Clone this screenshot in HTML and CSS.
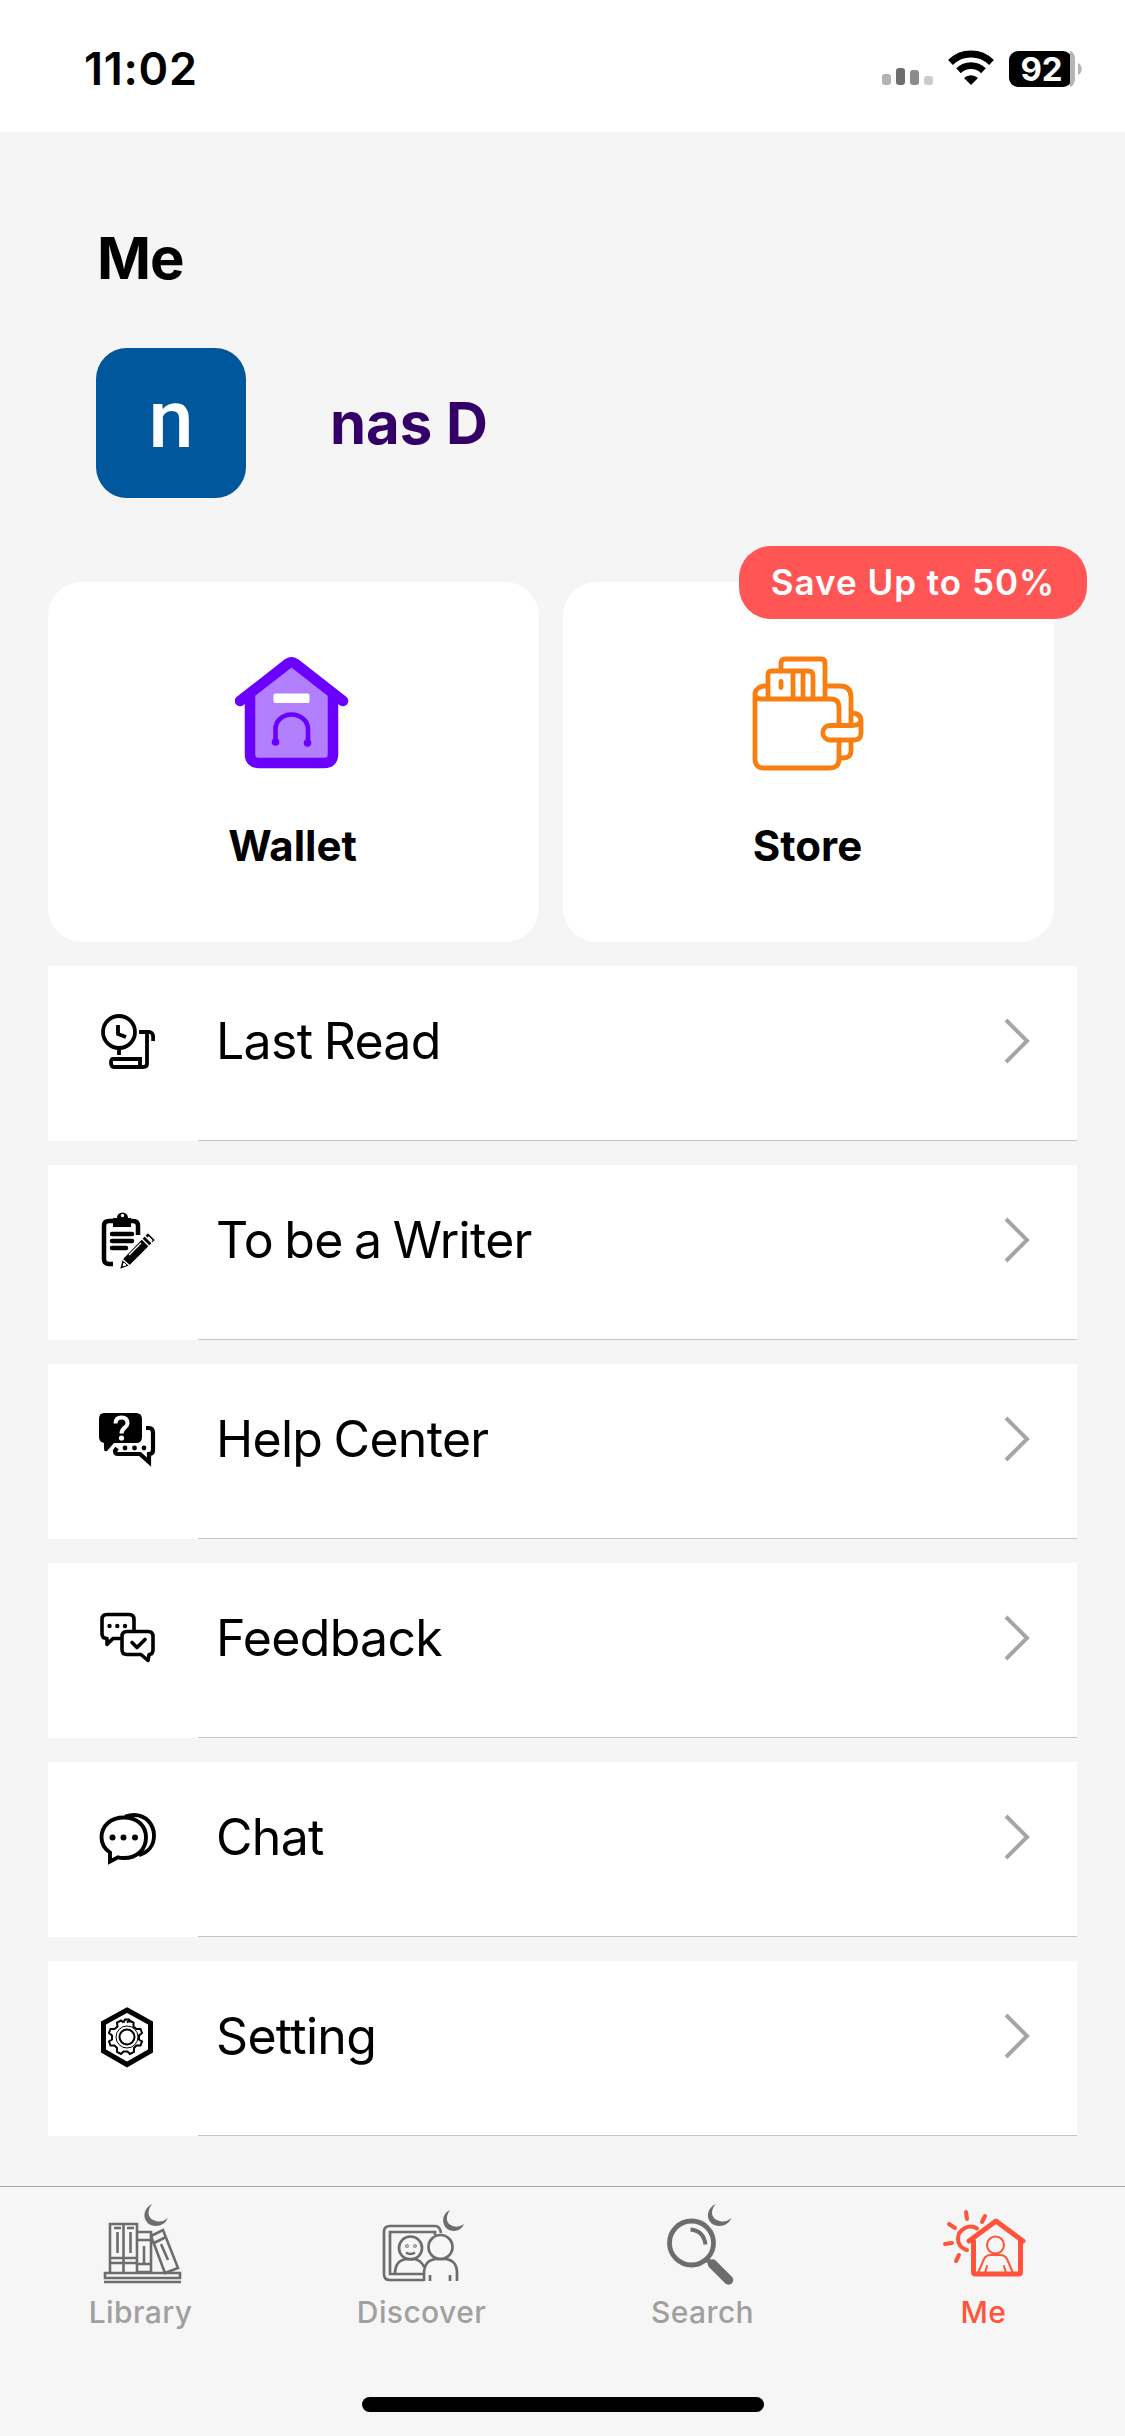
FILE: index.html
```html
<!DOCTYPE html>
<html lang="en">
<head>
<meta charset="utf-8">
<title>Me</title>
<link rel="stylesheet" href="styles.css">
</head>
<body>
<div class="screen">
  <header class="status">
    <span class="status-time">11:02</span>
    <svg class="status-icons" width="204" height="40" viewBox="0 0 204 40">
      <rect x="0" y="24" width="9" height="11" rx="3" fill="#b3b3b3"/>
      <rect x="14" y="18" width="9" height="17" rx="3" fill="#6e6e6e"/>
      <rect x="28" y="20" width="9" height="15" rx="3" fill="#8b8b8b"/>
      <rect x="42" y="26" width="9" height="9" rx="3" fill="#cbcbcb"/>
      <g fill="none" stroke="#000" stroke-width="6.8">
        <path d="M68.500 12.500A29 29 0 0 1 109.500 12.500"/>
        <path d="M76.500 20.700A18 18 0 0 1 101.500 20.700"/>
      </g>
      <path d="M89 35l-7-7a10 10 0 0 1 14 0z"/>
      <rect x="127" y="1" width="63" height="36" rx="9"/>
      <path d="M188 1c3.500 1 5 4 5 8v20c0 4-2 7-5 8z" fill="#b5b5b5"/>
      <path d="M196 13c5 2 5 10 0 12z" fill="#b5b5b5"/>
      <text class="battery-text" x="159.500" y="30.500" text-anchor="middle">92</text>
    </svg>
  </header>

  <main class="content">
    <h1 class="title">Me</h1>
    <section class="profile">
      <div class="avatar">n</div>
      <div class="name">nas D</div>
    </section>

    <section class="cards">
      <div class="card">
        <svg class="card-icon" width="116" height="116" viewBox="1.500 0 116 116">
          <path d="M16 39L58 7l42 32v66a5 5 0 0 1-5 5H21a5 5 0 0 1-5-5z" fill="#b280fe"/>
          <g fill="none" stroke="#6a00ff" stroke-linecap="round" stroke-linejoin="round">
            <path d="M6.500 46L54.500 8.500q3.500-2.500 7 0L109.500 46" stroke-width="10.500"/>
            <path d="M16.500 42v57q0 9 9 9h65q9 0 9-9V42" stroke-width="10.500"/>
            <path d="M42 88V74c0-8 7-14.500 16-14.500S74.500 66 74.500 74v15" stroke-width="4.600"/>
          </g>
          <circle cx="42" cy="87" r="3.800" fill="#6a00ff"/><circle cx="74" cy="88" r="3.800" fill="#6a00ff"/>
          <rect x="40" y="38.500" width="36" height="9.500" rx="2" fill="#fff"/>
        </svg>
        <span class="card-label">Wallet</span>
      </div>
      <div class="card">
        <span class="badge">Save Up to 50%</span>
        <svg class="card-icon" width="116" height="116" viewBox="0 0 116 116" fill="none" stroke="#f77f12" stroke-width="4.800" stroke-linejoin="round" stroke-linecap="butt">
          <path d="M31 16V8q0-4 4-4h36q4 0 4 4v37"/>
          <path d="M18 44V20q0-4 4-4h36q5 0 5 5v23M43 17v27M53 17v27"/>
          <path d="M31 26.500v6" stroke-linecap="round"/>
          <path d="M18 31h-3a10 10 0 0 0-10 7q0 6 6 6h70q8 0 8 8v19M89 87v17q0 9-9 9H14q-9 0-9-9V38"/>
          <path d="M75 31h15q11 0 11 11v29M101 87v9q0 7-8 7h-4"/>
          <path d="M101 58q10 0 10 8v12q0 7-7 7H80a7 7 0 0 1 0-14.500h22q9 0 9-6"/>
        </svg>
        <span class="card-label">Store</span>
      </div>
    </section>

    <ul class="menu">
      <li class="row">
        <svg class="row-icon" width="64" height="64" viewBox="0 0 64 64" fill="none" stroke="#000" stroke-width="3.800">
          <circle cx="25" cy="22" r="16"/><path d="M24 15v9l8 3"/>
          <path d="M25 40v5M45 22h11q4 1 3 9M53 23v31q0 3-4 3H20q-3 0-3-4.500T20 49h28M46 50v7"/>
        </svg>
        <span class="row-body"><span class="row-label">Last Read</span><svg class="chevron" width="28" height="48" viewBox="0 0 28 48"><path d="M3 3l21 21L3 45"/></svg></span>
      </li>
      <li class="row">
        <svg class="row-icon" width="64" height="64" viewBox="0 0 64 64" fill="none" stroke="#000" stroke-width="4.500">
          <path d="M20 12h-5q-5 0-5 5v33q0 5 5 5h4M37 12h2q5 0 5 5v9" />
          <path d="M18 25h20M18 32h20M18 39h14" stroke-linecap="round"/>
          <path d="M19 9h4a5.500 5.500 0 0 1 11 0h3v9H19z" fill="#000" stroke="none"/><circle cx="28.500" cy="6.500" r="1.700" fill="#fff" stroke="none"/>
          <path d="M25 61l3-11 26-27 8 8-26 26z" fill="#000" stroke="#fff" stroke-width="1.800"/>
          <path d="M47 29l9 9M35 46l12-12M28 50l8 7M50 26l9 9" stroke="#fff" stroke-width="1.400"/>
          <path d="M29 57l1-3 2 2z" fill="#fff" stroke="#fff" stroke-width="1"/><path d="M54 28l4 4" stroke="#fff" stroke-width="2"/>
        </svg>
        <span class="row-body"><span class="row-label">To be a Writer</span><svg class="chevron" width="28" height="48" viewBox="0 0 28 48"><path d="M3 3l21 21L3 45"/></svg></span>
      </li>
      <li class="row">
        <svg class="row-icon" width="64" height="64" viewBox="0 -1 64 64" fill="none" stroke="#000" stroke-width="4.200">
          <path d="M10 4h32q6 0 6 6v18q0 6-6 6H20l-7 8q-3 1-3-2v-6q-5-1-5-6V10q0-6 5-6z" fill="#000" stroke="none"/>
          <path d="M21.500 14.500q0-6 6-6t6 6c0 4-6 4-6 10" stroke="#fff" stroke-width="4"/><circle cx="27.500" cy="29" r="2.600" fill="#fff" stroke="none"/>
          <path d="M52 19h3q4 0 4 5v17q0 4-4 4v8l-9-8H24q-3 0-3-3l2-3"/>
          <g fill="#000" stroke="none"><circle cx="31" cy="39" r="2.400"/><circle cx="40.500" cy="39" r="2.400"/><circle cx="50" cy="39" r="2.400"/></g>
        </svg>
        <span class="row-body"><span class="row-label">Help Center</span><svg class="chevron" width="28" height="48" viewBox="0 0 28 48"><path d="M3 3l21 21L3 45"/></svg></span>
      </li>
      <li class="row">
        <svg class="row-icon" width="64" height="64" viewBox="0 -.500 64 64" fill="none" stroke="#000" stroke-width="3.600" stroke-linejoin="round">
          <path d="M40 23V12q0-5-5-5H13q-5 0-5 5v14q0 5 5 5v6l6-6h8"/>
          <path d="M33 24h21q5 0 5 5v13q0 5-4 5l-1 6-7-6H33q-5 0-5-5V29q0-5 5-5z"/>
          <path d="M38 35l5 5 8-8" stroke-linecap="round"/>
          <g fill="#000" stroke="none"><circle cx="15.500" cy="18.500" r="2.200"/><circle cx="23.300" cy="18.500" r="2.200"/><circle cx="31" cy="18.500" r="2.200"/></g>
        </svg>
        <span class="row-body"><span class="row-label">Feedback</span><svg class="chevron" width="28" height="48" viewBox="0 0 28 48"><path d="M3 3l21 21L3 45"/></svg></span>
      </li>
      <li class="row">
        <svg class="row-icon" width="64" height="64" viewBox="0 -1.500 64 64" fill="none" stroke="#000" stroke-width="3.900">
          <path d="M16 45C10 41 7.500 36 7.500 30 7.500 18 17 10 30 10s22 8 22 20-9 20.500-22 20.500q-4 0-6-.7L16 54z"/>
          <path d="M31 9q5-1.500 9-1.500C52 7.500 60 17 60 28c0 10-6 17-15 19.500"/>
          <g fill="#000" stroke="none"><circle cx="18.500" cy="30" r="3"/><circle cx="29.500" cy="30" r="3"/><circle cx="41" cy="30" r="3"/></g>
        </svg>
        <span class="row-body"><span class="row-label">Chat</span><svg class="chevron" width="28" height="48" viewBox="0 0 28 48"><path d="M3 3l21 21L3 45"/></svg></span>
      </li>
      <li class="row">
        <svg class="row-icon" width="64" height="64" viewBox="0 0 64 64" fill="none" stroke="#000" stroke-width="2">
          <path d="M33 5l23.500 13v28L33 59.500 9.500 46V18z" stroke-width="5"/>
          <path d="M29.500 17.500l1.500-3h4l1.500 3M29.500 17.500l-2.500-2-4 2 .5 4-3 2.500-4 0-1.500 4 3 2.500v4l-3 2 1.500 4 4 0 2.500 2.500 0 4 4 2 2.500-2.500h4l2.500 2.500 4-2 0-4 2.500-2.500 4 0 1.500-4-3-2v-4l3-2.500-1.500-4-4 0-3-2.500 0-4-4-2-2.500 2"/>
          <circle cx="33" cy="32" r="7.500"/><circle cx="33" cy="32" r="11" stroke-width="1"/>
        </svg>
        <span class="row-body"><span class="row-label">Setting</span><svg class="chevron" width="28" height="48" viewBox="0 0 28 48"><path d="M3 3l21 21L3 45"/></svg></span>
      </li>
    </ul>
  </main>

  <nav class="tabs">
    <a class="tab">
      <svg class="tab-icon" width="90" height="90" viewBox="-4 0 90 90" fill="none" stroke="#6c6e6d" stroke-width="2.600">
        <path d="M10 68V20h27v48M23.500 20v48M10 54h27M10 59h27M17.500 28v21M30.500 28v21M14 24h7M27 24h7M38 28h13v40H38M38 36h13M44 42v17M38 60h13M51 32l12-6 15 38-13 5zM54 39l12-6M61 40l7 16"/>
        <path d="M5 69h75v5H5zM4 78h77"/>
        <path d="M52 0C40 6 43 22 56 22q8 0 12-8-6 5-12 3C48 15 46 8 52 0z" fill="#6c6e6d" stroke="none"/>
      </svg>
      <span>Library</span>
    </a>
    <a class="tab">
      <svg class="tab-icon" width="90" height="90" viewBox="-2 0 90 90" fill="none" stroke="#6c6e6d" stroke-width="2.700">
        <path d="M45 76H11q-6 0-6-6V28q0-6 6-6h45q5 0 6 7M45 70H11V28h45v3"/>
        <circle cx="31.500" cy="44" r="11.500"/><circle cx="61.500" cy="43" r="12"/>
        <path d="M16 70q0-14 12-15h7q7 1 10 8M45 77V70q0-14 12-15h9q12 1 12 14v8M51 71v6M71 71v6M27 48.500q4.500 3 9 0"/>
        <circle cx="28" cy="42" r=".5"/><circle cx="36" cy="42" r=".5"/>
        <path d="M71 6C60 11 63 27 75 27q7 0 10-7-6 4-11 2C67 20 66 13 71 6z" fill="#6c6e6d" stroke="none"/>
      </svg>
      <span>Discover</span>
    </a>
    <a class="tab">
      <svg class="tab-icon" width="90" height="90" viewBox="-3.500 0 90 90" fill="none" stroke="#6c6e6d" stroke-width="4.800">
        <circle cx="30" cy="39" r="22"/><path d="M29 25.500q13 1 15 15" stroke-width="4"/>
        <path d="M45 55l5 5"/><path d="M51 60l16 16" stroke-width="9.500" stroke-linecap="round"/>
        <path d="M54 0C42 6 45 22 58 22q8 0 12-8-6 5-12 3C50 15 48 8 54 0z" fill="#6c6e6d" stroke="none"/>
      </svg>
      <span>Search</span>
    </a>
    <a class="tab active">
      <svg class="tab-icon" width="90" height="90" viewBox="0 0 90 90" fill="none" stroke="#ff543a" stroke-width="4" stroke-linecap="round" stroke-linejoin="round">
        <path d="M30 37l27-20 27 20M34.500 37v31q0 2 2 2h43q2 0 2-2V37" stroke-width="5"/>
        <path d="M38 24.500c-8-5-19 1-19 10.500q0 8 9 11"/>
        <path d="M27 8l1 7M46 12l-3 6M10 20l6 4M6 40l7-1M20 51l-3 6"/>
        <g stroke-width="2"><circle cx="56.500" cy="41" r="8.500"/><path d="M39 69l6-14q2-4 7-4h9q5 0 7 4l6 14M48 62l-2 7M65 62l2 7"/></g>
      </svg>
      <span>Me</span>
    </a>
  </nav>
  <div class="home-bar"></div>
</div>
</body>
</html>
```
FILE: styles.css
```css
* { box-sizing: border-box; }
body { margin: 0; font-family: Inter, "Liberation Sans", sans-serif; color: #000; background: #f6f6f6; }
.screen { width: 1125px; height: 2436px; display: flex; flex-direction: column; background: #f6f6f6; overflow: hidden; }
.status { height: 132px; background: #fff; display: flex; justify-content: space-between; align-items: flex-start; padding: 50px 39px 0 84px; flex: none; }
.status-time { font-size: 45px; line-height: 38px; font-weight: 600; letter-spacing: .7px; }
.battery-text { font: 700 33px Inter, sans-serif; fill: #fff; }
.content { height: 2054px; flex: none; padding: 93px 48px 0; background: #f5f5f5; }
.title { margin: 0; padding-left: 49px; font-size: 58px; line-height: 66px; font-weight: 700; letter-spacing: -1px; }
.profile { display: flex; align-items: center; gap: 84px; margin-top: 57px; padding-left: 48px; }
.avatar { width: 150px; height: 150px; border-radius: 31px; background: #01579b; color: #fff; font: 500 81px/143px Roboto, sans-serif; text-align: center; }
.name { font-size: 58px; font-weight: 700; color: #340068; }
.cards { display: flex; gap: 24px; margin-top: 84px; }
.card { position: relative; width: 491px; height: 360px; border-radius: 34px; background: #fff; display: flex; flex-direction: column; align-items: center; padding: 73px 2px 0 0; }
.card-label { font-size: 42px; line-height: 50px; font-weight: 700; margin-top: 50px; }
.badge { position: absolute; left: 176px; top: -36px; width: 348px; height: 73px; border-radius: 32px; background: #ff5655; color: #fff; font-size: 35px; line-height: 73px; font-weight: 600; letter-spacing: 1px; text-align: center; white-space: nowrap; }
.menu { list-style: none; margin: 24px 0 0; padding: 0; display: grid; gap: 24px; }
.row { height: 175px; background: #fff; display: flex; }
.row-icon { flex: none; margin: 44px 40px 0 46px; }
.row-body { flex: 1; display: flex; justify-content: space-between; align-items: flex-start; padding: 45px 46px 0 18px; border-bottom: 1px solid #c4c4c6; }
.row-label { font-size: 50px; line-height: 60px; white-space: nowrap; letter-spacing: -.7px; word-spacing: -2px; }
.chevron { margin-top: 6px; fill: none; stroke: #a5a5a5; stroke-width: 4; }
.tabs { height: 190px; flex: none; border-top: 1px solid #a6a6a6; background: #f6f6f6; display: grid; grid-template-columns: repeat(4, 281px); }
.tab { display: flex; flex-direction: column; align-items: center; padding-top: 17px; color: #a0a0a0; font-size: 30px; line-height: 36px; font-weight: 500; letter-spacing: .4px; }
.tab.active { color: #ff543a; }
.home-bar { width: 402px; height: 15px; margin: 21px auto 0; border-radius: 8px; background: #000; }
```
